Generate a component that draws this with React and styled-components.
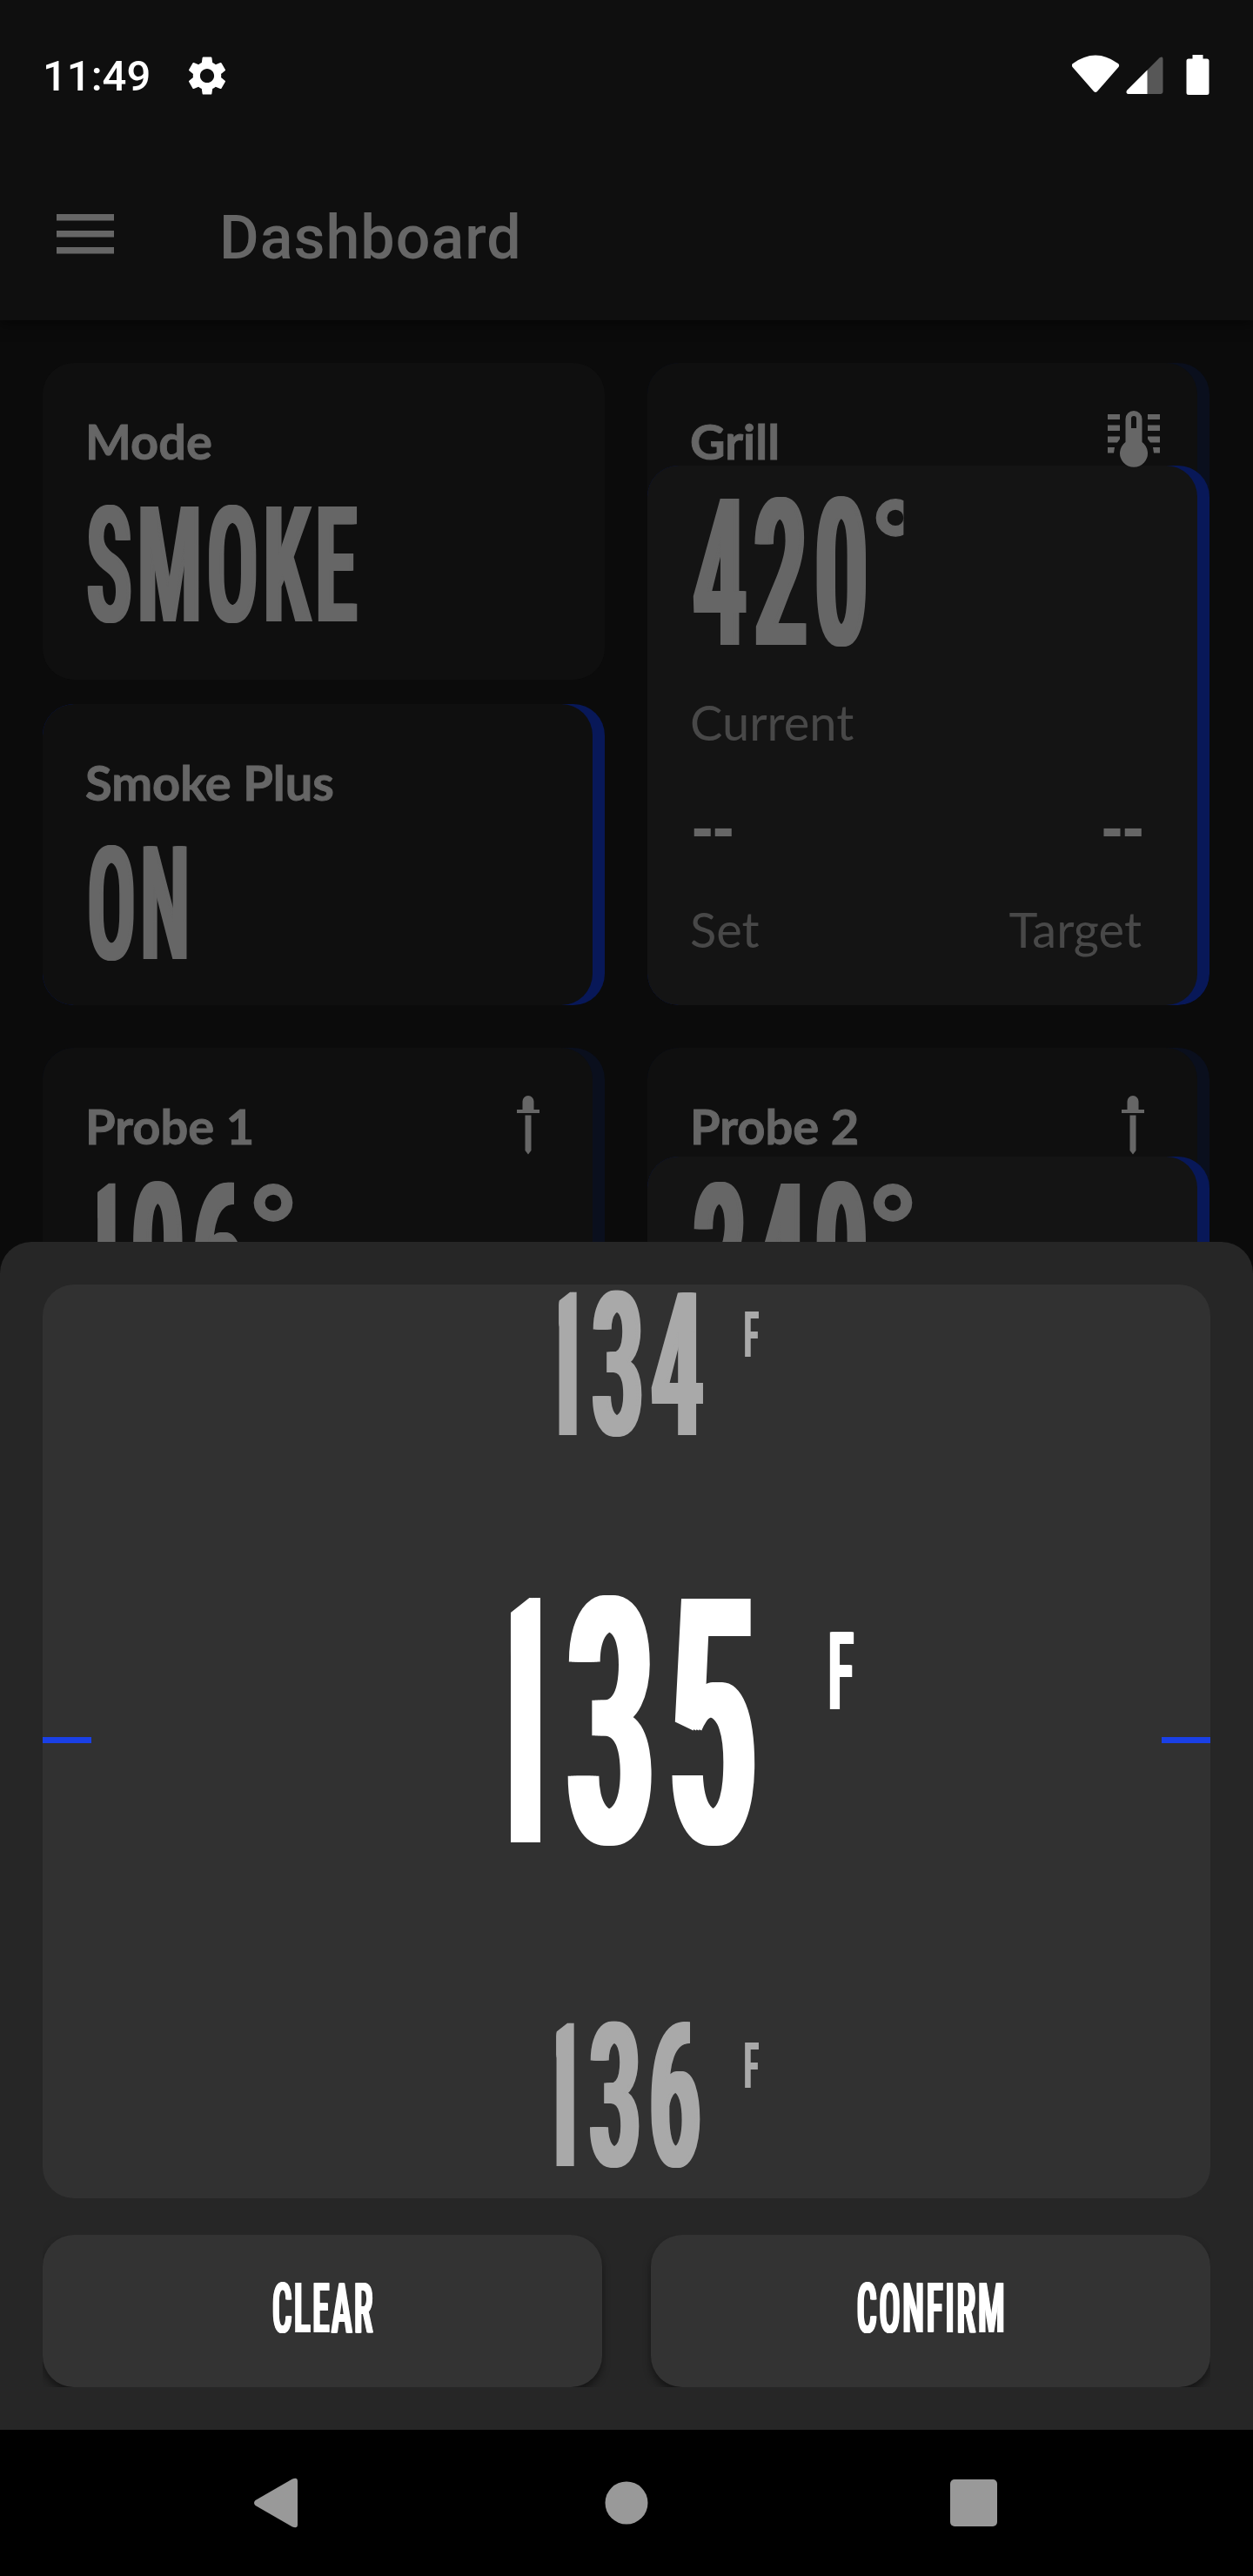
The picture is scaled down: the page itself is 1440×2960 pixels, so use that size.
import React from "react";
import styled, { createGlobalStyle } from "styled-components";
import { MdSettings } from "react-icons/md";

const GlobalStyle = createGlobalStyle`
  *, *::before, *::after { box-sizing: border-box; }
  body { margin: 0; background: #000; }
`;

const Screen = styled.div`
  position: relative;
  display: flex;
  flex-direction: column;
  width: 1440px;
  height: 2960px;
  overflow: hidden;
  background: #0b0b0b;
  color: #666;
  font-family: Roboto, "Liberation Sans", sans-serif;
`;

const TopArea = styled.header`
  flex: none;
  height: 368px;
  background: #0f0f0f;
  box-shadow: 0 4px 14px rgba(0, 0, 0, 0.55);
`;

const StatusBar = styled.div`
  display: flex;
  align-items: center;
  height: 172px;
  padding: 4px 50px 0 49px;
  color: #fff;
`;

const Clock = styled.span`
  font-size: 49px;
  font-weight: 500;
  line-height: 60px;
`;

const StatusGear = styled(MdSettings)`
  width: 54px;
  height: 54px;
  margin: -3px 0 0 38px;
`;

const StatusIcons = styled.svg`
  width: 158px;
  height: 46px;
  margin: -4px 0 0 auto;
`;

const AppBar = styled.div`
  display: flex;
  align-items: center;
  height: 196px;
  padding: 6px 0 0 65px;
`;

const MenuIcon = styled.svg`
  width: 66px;
  height: 46px;
  margin-top: -8px;
`;

const Title = styled.h1`
  margin: 0 0 0 121px;
  font-size: 70px;
  font-weight: 500;
  line-height: 80px;
  letter-spacing: 1px;
`;

const Board = styled.main`
  display: grid;
  grid-template-columns: 646px 646px;
  gap: 49px;
  padding: 49px 0 0 49px;
`;

const Stack = styled.div`
  display: flex;
  flex-direction: column;
  gap: 28px;
`;

const Card = styled.section`
  position: relative;
  isolation: isolate;
  height: ${(p) => p.$height}px;
  padding: 56px 0 0 49px;
  border-radius: 36px;
  overflow: hidden;
  background: ${(p) => p.$edge || "#0f0f0f"};

  &::before {
    content: "";
    position: absolute;
    z-index: -2;
    inset: 0 ${(p) => (p.$edge ? 14 : 0)}px 0 0;
    border-radius: 36px;
    background: #0f0f0f;
  }
`;

const Fill = styled.div`
  position: absolute;
  z-index: -1;
  inset: ${(p) => p.$from}px 0 0 0;
  border-radius: 36px;
  background: #081858;

  &::before {
    content: "";
    position: absolute;
    inset: 0 14px 0 0;
    border-radius: 36px;
    background: #141414;
  }
`;

const CardHead = styled.div`
  display: flex;
  align-items: flex-start;
  justify-content: space-between;
  height: 68px;
  padding-right: ${(p) => p.$end || 0}px;

  svg {
    flex: none;
    margin-top: -1px;
  }
`;

const Label = styled.h2`
  margin: 0;
  font-family: Lato, "Liberation Sans", sans-serif;
  font-size: 56px;
  font-weight: 700;
  line-height: 68px;
  white-space: nowrap;
  -webkit-text-stroke: 0.9px currentColor;
`;

const Caption = styled.span`
  color: #484848;
  font-family: Lato, "Liberation Sans", sans-serif;
  font-size: 56px;
  line-height: 68px;
`;

const Condensed = styled.span`
  display: block;
  flex: none;
  width: ${(p) => (p.$width ? `${p.$width}px` : "auto")};
  margin: ${(p) => p.$margin || 0};
  font-family: "Roboto Condensed", Roboto, sans-serif;
  font-size: ${(p) => p.$size}px;
  font-weight: 600;
  line-height: ${(p) => p.$size}px;
  letter-spacing: ${(p) => p.$track ?? 0.055}em;
  white-space: nowrap;
  text-shadow: 0.016em 0 0, 0.031em 0 0, 0.046em 0 0;
  transform: scaleX(${(p) => p.$stretch || 0.53});
  transform-origin: ${(p) => p.$origin || "left"} center;
`;

const One = styled.span`
  display: inline-block;
  letter-spacing: 0;
  clip-path: inset(0 -0.2em 0 0.225em);
`;

const Reading = styled.div`
  display: flex;
  height: 236px;
  margin: 2px 0 0 ${(p) => p.$shift || 0}px;
`;

const Degree = styled.span`
  width: ${(p) => p.$width || 80}px;
  height: 100px;
  margin-top: 42px;
  font-size: 183px;
  font-weight: 700;
  line-height: 100px;
  transform: scale(0.9, 0.87);
  transform-origin: left center;
  -webkit-text-stroke: 1.5px currentColor;
  clip-path: ${(p) => (p.$width ? "inset(-40px 0 0 0)" : "none")};
`;

const Split = styled.div`
  display: flex;
  justify-content: space-between;
  margin-top: ${(p) => p.$gap}px;
  padding-right: 78px;
`;

const Dashes = styled.span`
  font-family: "Roboto Condensed", Roboto, sans-serif;
  font-size: 80px;
  font-weight: 700;
  line-height: 100px;
  letter-spacing: -4.8px;
`;

const Sheet = styled.div`
  position: absolute;
  left: 0;
  right: 0;
  bottom: 168px;
  display: flex;
  flex-direction: column;
  gap: 42px;
  height: 1365px;
  padding: 49px;
  border-radius: 36px 36px 0 0;
  background: #262626;
  color: #fff;
`;

const Picker = styled.div`
  position: relative;
  flex: none;
  height: 1050px;
  overflow: hidden;
  border-radius: 36px;
  background: #313131;
`;

const Mark = styled.i`
  position: absolute;
  top: 520px;
  ${(p) => p.$side}: 0;
  width: 56px;
  height: 7px;
  background: #1a40e6;
`;

const Option = styled.div`
  display: flex;
  align-items: center;
  height: ${(p) => p.$height}px;
  padding-left: ${(p) => p.$start}px;
  color: ${(p) => (p.$selected ? "#fff" : "#a9a9a9")};
`;

const Unit = styled.div`
  padding-bottom: ${(p) => p.$raise}px;
`;

const Actions = styled.div`
  display: flex;
  gap: 56px;
  height: 175px;
  overflow: hidden;
`;

const Action = styled.button`
  display: flex;
  flex: 1;
  align-items: center;
  justify-content: center;
  padding: 0 0 5px;
  border: 0;
  border-radius: 36px;
  background: #333;
  box-shadow: 0 6px 10px rgba(0, 0, 0, 0.45);
  color: #fff;
`;

const NavBar = styled.nav`
  position: absolute;
  left: 0;
  right: 0;
  bottom: 0;
  display: flex;
  align-items: center;
  justify-content: space-between;
  height: 168px;
  padding: 0 294px 0 292px;
  background: #000;
`;

const HomeIcon = styled.svg`
  margin-left: 5px;
`;

const ThermometerIcon = () => (
  <svg width="60" height="66" viewBox="0 0 60 66" fill="#666">
    <path d="M0 4h14v6H0zM0 16.500h14v6.500H0zM0 29.500h14v3l-3 4H0zM0 42h8l-1 6.500H0z" />
    <path d="M46 4h14v6H46zM46 16.500h14v6.500H46zM46 29.500h14v7H49l-3-4zM52 42h8v6.500h-7z" />
    <path
      fillRule="evenodd"
      d="M20.500 9.500a9.500 9.500 0 0 1 19 0V36a16 16 0 1 1-19 0zM27 9v11h6V9a3 3 0 0 0-6 0z"
    />
  </svg>
);

const ProbeIcon = () => (
  <svg width="26" height="68" viewBox="0 0 26 68" fill="#666">
    <path d="M6.500 16V6.500a6.500 6.500 0 0 1 13 0V16H26v4H0v-4zM9.500 22.500h7V63L13 67.500 9.500 63z" />
  </svg>
);

function TemperatureOption({ last, height, start, size, width, unitSize, raise, selected }) {
  return (
    <Option $height={height} $start={start} $selected={selected}>
      <Condensed $size={size} $width={width}>
        <One>1</One>3{last}
      </Condensed>
      <Unit $raise={raise}>
        <Condensed $size={unitSize} $stretch={0.5}>
          F
        </Condensed>
      </Unit>
    </Option>
  );
}

export default function App() {
  return (
    <Screen>
      <GlobalStyle />
      <TopArea>
        <StatusBar>
          <Clock>11:49</Clock>
          <StatusGear />
          <StatusIcons viewBox="0 0 158 46" fill="#fff">
            <path d="M1 10Q27-9 53 10q2 1.500.500 4L29 42q-2 2-4 0L.500 14Q-1 11.500 1 10z" />
            <path
              fill="#575757"
              d="M63 41 100.500 3.500q4-2.500 4 1.500v37q0 3-3 3H64.500q-3-1-1.500-4z"
            />
            <path d="M63 41 86.500 17.500V45H64.500q-3-1-1.500-4z" />
            <path d="M138.500 0h12v4.500h4.500q2.500 0 2.500 2.500v36.500q0 2.500-2.500 2.500h-21q-2.500 0-2.500-2.500V7q0-2.500 2.500-2.500h4.500z" />
          </StatusIcons>
        </StatusBar>
        <AppBar>
          <MenuIcon viewBox="0 0 66 46" fill="#666">
            <path d="M0 0h66v7.500H0zM0 19h66v7.500H0zM0 38h66v7.500H0z" />
          </MenuIcon>
          <Title>Dashboard</Title>
        </AppBar>
      </TopArea>

      <Board>
        <Stack>
          <Card $height={364}>
            <CardHead>
              <Label>Mode</Label>
            </CardHead>
            <Condensed $size={186} $margin="16px 0 0 -1px">
              SMOKE
            </Condensed>
          </Card>
          <Card $height={346} $edge="#081858">
            <CardHead>
              <Label>Smoke Plus</Label>
            </CardHead>
            <Condensed $size={182} $stretch={0.51} $margin="16px 0 0">
              ON
            </Condensed>
          </Card>
        </Stack>

        <Card $height={738} $edge="#0a0f1d">
          <Fill $from={118} />
          <CardHead $end={57}>
            <Label>Grill</Label>
            <ThermometerIcon />
          </CardHead>
          <Reading>
            <Condensed $size={236} $width={204}>
              420
            </Condensed>
            <Degree $width={46}>°</Degree>
          </Reading>
          <Split $gap={17}>
            <Caption>Current</Caption>
          </Split>
          <Split $gap={40}>
            <Dashes>--</Dashes>
            <Dashes>--</Dashes>
          </Split>
          <Split $gap={30}>
            <Caption>Set</Caption>
            <Caption>Target</Caption>
          </Split>
        </Card>

        <Card $height={738} $edge="#0a0f1d">
          <CardHead $end={75}>
            <Label>Probe 1</Label>
            <ProbeIcon />
          </CardHead>
          <Reading $shift={-14}>
            <Condensed $size={236} $width={198}>
              <One>1</One>06
            </Condensed>
            <Degree>°</Degree>
          </Reading>
        </Card>

        <Card $height={738} $edge="#0a0f1d">
          <Fill $from={125} />
          <CardHead $end={75}>
            <Label>Probe 2</Label>
            <ProbeIcon />
          </CardHead>
          <Reading>
            <Condensed $size={236} $width={201}>
              240
            </Condensed>
            <Degree>°</Degree>
          </Reading>
        </Card>
      </Board>

      <Sheet>
        <Picker>
          <TemperatureOption last={4} height={188} start={566} size={231} width={239} unitSize={72} raise={71} />
          <TemperatureOption last={5} height={636} start={491} size={394} width={410} unitSize={125} raise={122} selected />
          <TemperatureOption last={6} height={220} start={563} size={231} width={242} unitSize={72} raise={71} />
          <Mark $side="left" />
          <Mark $side="right" />
        </Picker>
        <Actions>
          <Action>
            <Condensed $size={79} $track={0.045} $stretch={0.515} $origin="center">
              CLEAR
            </Condensed>
          </Action>
          <Action>
            <Condensed $size={79} $track={0.052} $stretch={0.52} $origin="center">
              CONFIRM
            </Condensed>
          </Action>
        </Actions>
      </Sheet>

      <NavBar>
        <svg width="50" height="58" viewBox="0 0 50 58" fill="#999">
          <path d="M1.500 26 44 1.500Q50-1 50 4v50q0 5-6 2.500L1.500 32q-3-3 0-6z" />
        </svg>
        <HomeIcon width="50" height="50" viewBox="0 0 50 50" fill="#999">
          <circle cx="25" cy="25" r="24.500" />
        </HomeIcon>
        <svg width="54" height="54" viewBox="0 0 54 54" fill="#999">
          <rect width="54" height="54" rx="5" />
        </svg>
      </NavBar>
    </Screen>
  );
}
